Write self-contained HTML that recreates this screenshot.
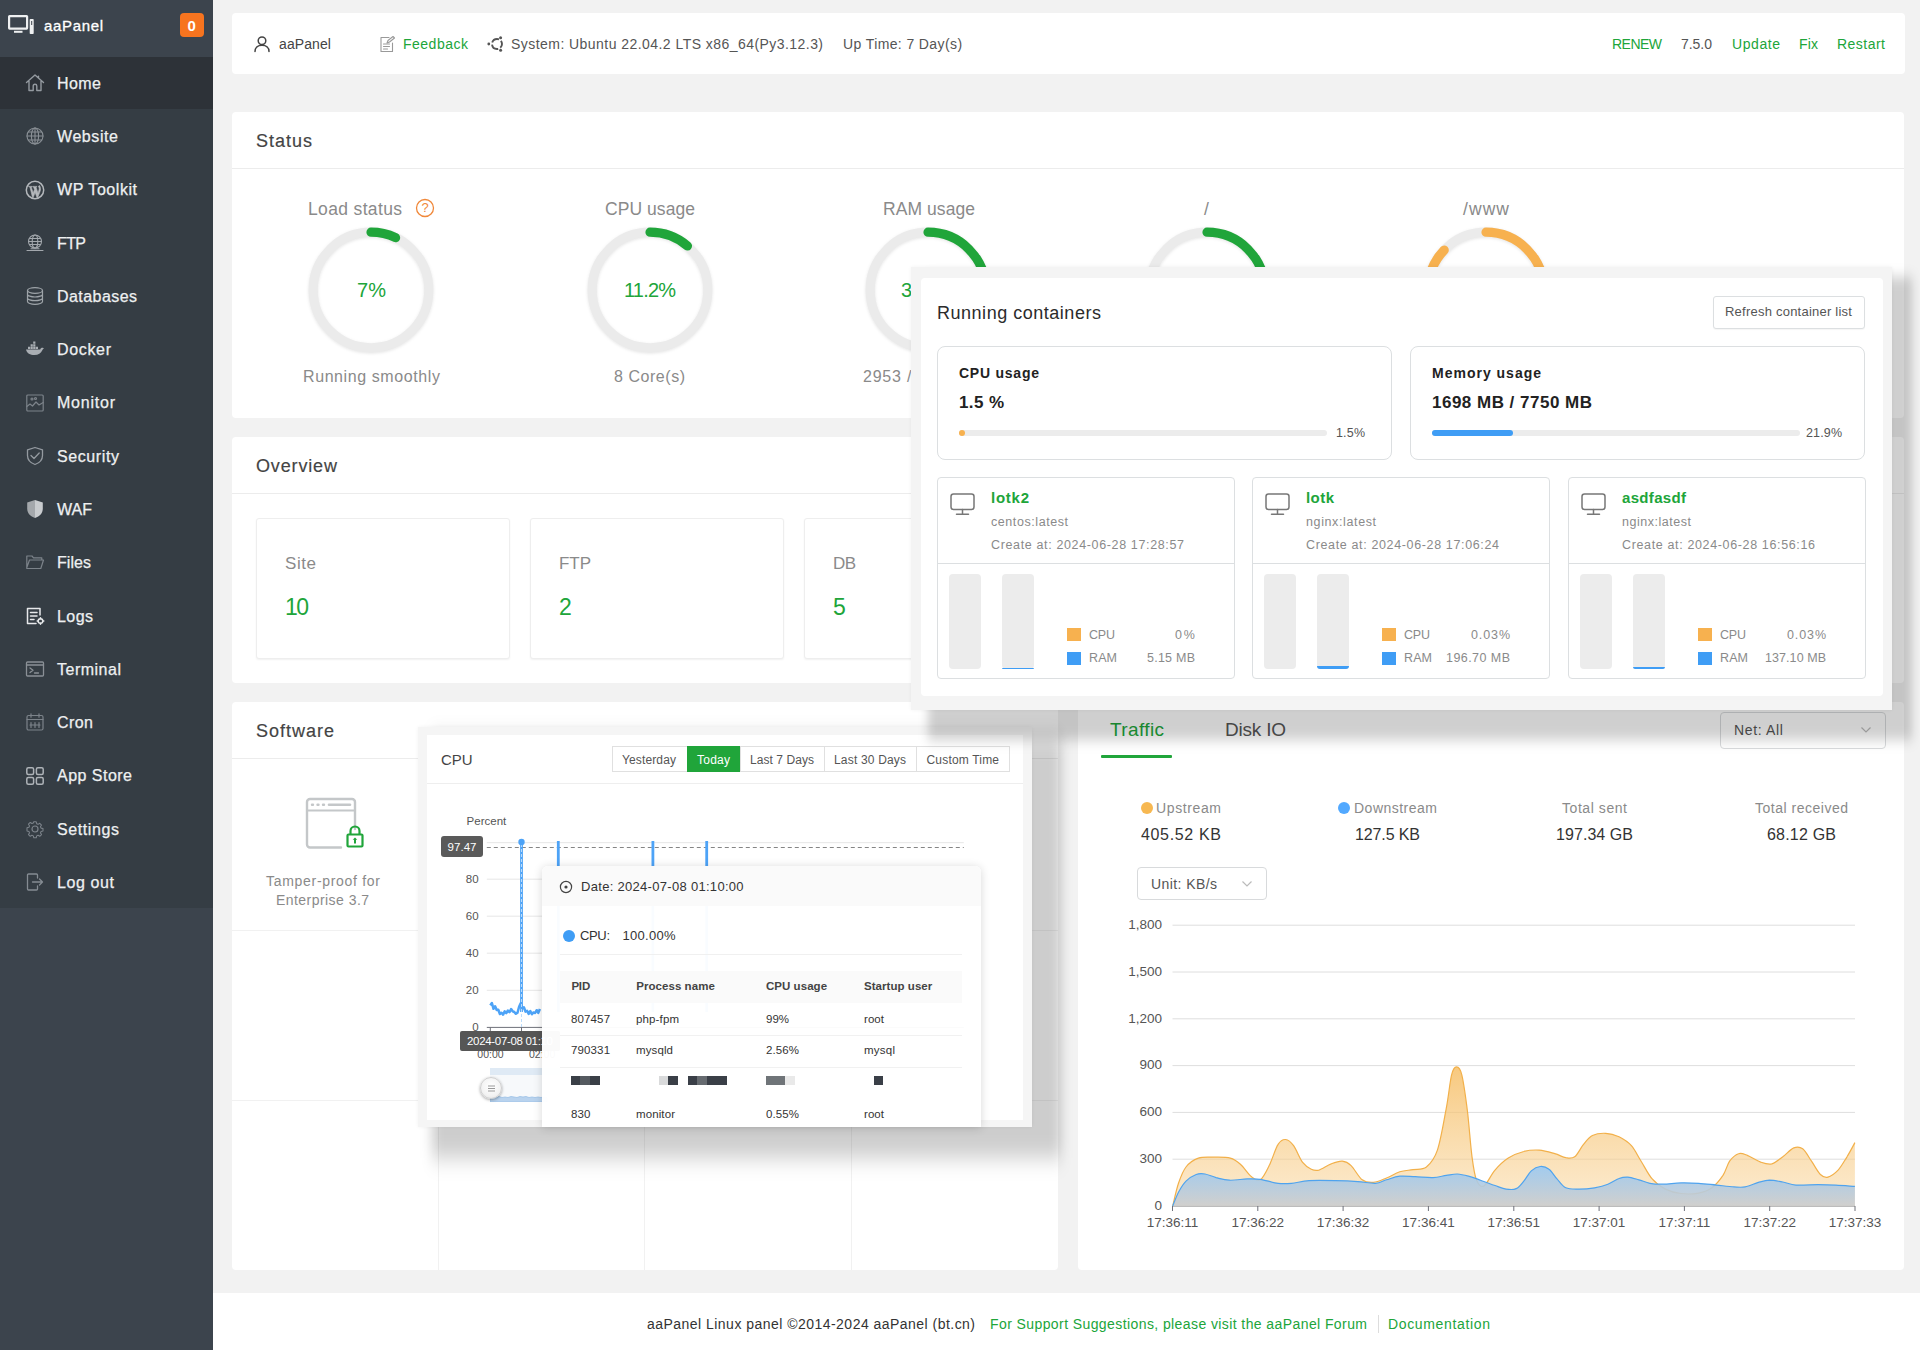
<!DOCTYPE html>
<html lang="en"><head><meta charset="utf-8"><title>aaPanel</title>
<style>
*{margin:0;padding:0;box-sizing:border-box}
html,body{width:1920px;height:1350px;overflow:hidden}
body{position:relative;background:#f2f2f2;font-family:"Liberation Sans",sans-serif;}
.t{position:absolute;white-space:nowrap;line-height:20px;height:20px}
.b{position:absolute;display:block}
.p{position:absolute;background:#fff;border-radius:4px}
</style></head>
<body>
<!-- sec_sidebar -->
<div class="b" style="left:0px;top:0px;width:213px;height:1350px;background:#3c444d"></div>
<div class="b" style="left:0px;top:57px;width:213px;height:851px;background:#353d44"></div>
<div class="b" style="left:0px;top:57px;width:213px;height:52px;background:#2d3238"></div>
<svg class="b" style="left:7px;top:14px;" width="28" height="22" viewBox="0 0 28 22"><g fill="none" stroke="#eef0f1" stroke-width="2.200" stroke-linejoin="round"><rect x="2.100" y="2.100" width="18" height="12.500" rx="0.500"></rect></g><g fill="#eef0f1"><rect x="7" y="16.800" width="8.500" height="2"></rect><rect x="22.700" y="5" width="4" height="15" rx="0.800"></rect></g><rect x="24.200" y="7" width="1" height="4" fill="#3c444d"></rect></svg>
<span class="t" style="left: 44px; top: 15.8px; font-size: 15px; color: rgb(255, 255, 255); -webkit-text-stroke: 0.3px rgb(255, 255, 255); letter-spacing: 0.66px;">aaPanel</span>
<div class="b" style="left:180px;top:13px;width:24px;height:24px;background:#f7741f;border-radius:4px"></div>
<span class="t" style="left:187.5px;top:15.5px;font-size:15px;color:#fff;font-weight:700;">0</span>
<svg class="b" style="left:25px;top:73px;" width="20" height="20" viewBox="0 0 20 20"><path fill="none" stroke="#949aa0" stroke-linecap="round" stroke-linejoin="round" stroke-width="1.400" d="M1.5 9.5L10 2l8.500 7.500M4 8v9.500h4.200V13a1.800 1.800 0 0 1 3.600 0v4.500H16V8M13.500 3.200V5"></path></svg>
<span class="t" style="left: 57px; top: 73.8px; font-size: 16px; color: rgb(238, 240, 241); -webkit-text-stroke: 0.25px rgb(238, 240, 241); letter-spacing: 0.44px;">Home</span>
<svg class="b" style="left:25px;top:126px;" width="20" height="20" viewBox="0 0 20 20"><g fill="none" stroke="#8a9096" stroke-linecap="round" stroke-linejoin="round" stroke-width="1.1"><circle cx="10" cy="10" r="8"></circle><ellipse cx="10" cy="10" rx="3.600" ry="8"></ellipse><path d="M2 10h16M3.200 6h13.600M3.200 14h13.600M10 2v16"></path></g></svg>
<span class="t" style="left: 57px; top: 127.1px; font-size: 16px; color: rgb(238, 240, 241); -webkit-text-stroke: 0.25px rgb(238, 240, 241); letter-spacing: 0.58px;">Website</span>
<svg class="b" style="left:25px;top:180px;" width="20" height="20" viewBox="0 0 20 20"><circle cx="10" cy="10" r="8.700" fill="none" stroke="#b4b8bc" stroke-width="1.500"></circle><path fill="#b4b8bc" stroke="#b4b8bc" stroke-width=".600" stroke-linejoin="round" d="M3.300 7.200h3.700v.7h-.9l2.100 6 1.200-3.600-.9-2.400h-.8v-.7h4.200v.7h-.9l2.100 6 1-3.100c.5-1.500.1-2.300-.3-2.900-.5-.8.100-1.700.9-1.600 1.300 2.200 1.200 4.600.5 6.300l-2.400 6.100h-.8l-1.900-5.300-1.900 5.300h-.8L4.800 7.900h-.9z" transform="translate(0.300,-0.600) scale(0.97)"></path></svg>
<span class="t" style="left: 57px; top: 180.3px; font-size: 16px; color: rgb(238, 240, 241); -webkit-text-stroke: 0.25px rgb(238, 240, 241); letter-spacing: 0.56px;">WP Toolkit</span>
<svg class="b" style="left:25px;top:233px;" width="20" height="20" viewBox="0 0 20 20"><g fill="none" stroke="#a3a8ad" stroke-linecap="round" stroke-linejoin="round" stroke-width="1.1"><circle cx="10" cy="8.500" r="6.500"></circle><ellipse cx="10" cy="8.500" rx="2.800" ry="6.500"></ellipse><path d="M3.500 8.500h13M4.500 5.500h11M4.500 11.500h11M2 17.500h16M6 15.800h8"></path></g></svg>
<span class="t" style="left: 57px; top: 233.6px; font-size: 16px; color: rgb(238, 240, 241); -webkit-text-stroke: 0.25px rgb(238, 240, 241); letter-spacing: -0.61px;">FTP</span>
<svg class="b" style="left:25px;top:286px;" width="20" height="20" viewBox="0 0 20 20"><g fill="none" stroke="#9ea4a9" stroke-linecap="round" stroke-linejoin="round" stroke-width="1.2"><ellipse cx="10" cy="4.500" rx="7.500" ry="2.800"></ellipse><path d="M2.500 4.500v11c0 1.500 3.400 2.800 7.500 2.800s7.500-1.300 7.500-2.800v-11M2.500 8.200c0 1.500 3.400 2.800 7.500 2.800s7.500-1.300 7.500-2.800M2.500 11.900c0 1.500 3.400 2.800 7.500 2.800s7.500-1.300 7.500-2.800"></path></g></svg>
<span class="t" style="left: 57px; top: 286.9px; font-size: 16px; color: rgb(238, 240, 241); -webkit-text-stroke: 0.25px rgb(238, 240, 241); letter-spacing: 0.44px;">Databases</span>
<svg class="b" style="left:25px;top:339px;" width="20" height="20" viewBox="0 0 20 20"><g fill="#a9aeb3" stroke="none"><path d="M1 10.500h14.200c.3-1.200 1.300-1.900 2.600-1.700.4.100.9.300 1.200.6-1 .4-1.300 1-1.700 1.800-1.300 3.200-4 4.800-7.800 4.800-4.500 0-7.500-1.500-8.500-5.500z"></path><path d="M3 7.800h2.200v2.200H3zM5.600 7.800h2.200v2.200H5.600zM8.200 7.800h2.200v2.200H8.200zM10.800 7.800H13v2.200h-2.200zM5.600 5.200h2.200v2.200H5.600zM8.200 5.200h2.200v2.200H8.200zM8.200 2.600h2.200v2.200H8.200z"></path></g></svg>
<span class="t" style="left: 57px; top: 340.2px; font-size: 16px; color: rgb(238, 240, 241); -webkit-text-stroke: 0.25px rgb(238, 240, 241); letter-spacing: 0.66px;">Docker</span>
<svg class="b" style="left:25px;top:393px;" width="20" height="20" viewBox="0 0 20 20"><g fill="none" stroke="#7c838a" stroke-linecap="round" stroke-linejoin="round" stroke-width="1.2"><rect x="1.800" y="2" width="16.400" height="16" rx="1"></rect><path d="M1.800 13.500l3.200-2.500 2.500 2 3.500-4 3 3 4.200-2.500"></path><circle cx="7" cy="6" r="1"></circle><circle cx="10.500" cy="5.500" r="1"></circle></g></svg>
<span class="t" style="left: 57px; top: 393.4px; font-size: 16px; color: rgb(238, 240, 241); -webkit-text-stroke: 0.25px rgb(238, 240, 241); letter-spacing: 0.77px;">Monitor</span>
<svg class="b" style="left:25px;top:446px;" width="20" height="20" viewBox="0 0 20 20"><g fill="none" stroke="#949aa0" stroke-linecap="round" stroke-linejoin="round" stroke-width="1.3"><path d="M10 1.500l7.500 2.300v5.700c0 4.300-3 7.400-7.500 9-4.500-1.600-7.500-4.700-7.500-9V3.800z"></path><path d="M6 9.500l3 3 5.200-5.500"></path></g></svg>
<span class="t" style="left: 57px; top: 446.7px; font-size: 16px; color: rgb(238, 240, 241); -webkit-text-stroke: 0.25px rgb(238, 240, 241); letter-spacing: 0.6px;">Security</span>
<svg class="b" style="left:25px;top:499px;" width="20" height="20" viewBox="0 0 20 20"><g fill="#c9cccf" stroke="none"><path d="M10 1l7.800 2.500v6.200c0 4.400-3.100 7.600-7.800 9.300V1z"></path><path opacity=".75" d="M10 1L2.200 3.500v6.200c0 4.400 3.100 7.600 7.800 9.300V1z"></path></g></svg>
<span class="t" style="left: 57px; top: 500px; font-size: 16px; color: rgb(238, 240, 241); -webkit-text-stroke: 0.25px rgb(238, 240, 241); letter-spacing: 0.02px;">WAF</span>
<svg class="b" style="left:25px;top:552px;" width="20" height="20" viewBox="0 0 20 20"><g fill="none" stroke="#7c838a" stroke-linecap="round" stroke-linejoin="round" stroke-width="1.2"><path d="M1.800 15.500V4h5.200l1.500 1.800h8.300v2.200M1.800 15.500l2.700-7.500h14l-2.700 8.500H1.800z"></path></g></svg>
<span class="t" style="left: 57px; top: 553.2px; font-size: 16px; color: rgb(238, 240, 241); -webkit-text-stroke: 0.25px rgb(238, 240, 241); letter-spacing: 0.05px;">Files</span>
<svg class="b" style="left:25px;top:606px;" width="20" height="20" viewBox="0 0 20 20"><g fill="none" stroke="#e6e8ea" stroke-width="1.500" stroke-linecap="round" stroke-linejoin="round"><path d="M15 9V2.500H2.500v15H11"></path><path d="M5.500 6.500h6.500M5.500 10h6.500M5.500 13.500h3.500"></path><circle cx="15.500" cy="15" r="2.300"></circle><path d="M15.500 11.700v1M15.500 17.300v1M12.200 15h1M17.800 15h1"></path></g></svg>
<span class="t" style="left: 57px; top: 606.5px; font-size: 16px; color: rgb(238, 240, 241); -webkit-text-stroke: 0.25px rgb(238, 240, 241); letter-spacing: 0.43px;">Logs</span>
<svg class="b" style="left:25px;top:659px;" width="20" height="20" viewBox="0 0 20 20"><g fill="none" stroke="#8a9096" stroke-linecap="round" stroke-linejoin="round" stroke-width="1.300"><rect x="1.500" y="3" width="17" height="14" rx="1"></rect><path d="M1.500 6h17M5 9l3 2.300L5 13.600M9.500 14h4"></path></g></svg>
<span class="t" style="left: 57px; top: 659.8px; font-size: 16px; color: rgb(238, 240, 241); -webkit-text-stroke: 0.25px rgb(238, 240, 241); letter-spacing: 0.5px;">Terminal</span>
<svg class="b" style="left:25px;top:712px;" width="20" height="20" viewBox="0 0 20 20"><g fill="none" stroke="#7c838a" stroke-linecap="round" stroke-linejoin="round" stroke-width="1.200"><rect x="2" y="3.500" width="16" height="14.500" rx="1.500"></rect><path d="M2 7.500h16M6 1.800v3.400M14 1.800v3.400M6 10.500v5M10 10.500v5M14 10.500v5M5 13h10"></path></g></svg>
<span class="t" style="left: 57px; top: 713px; font-size: 16px; color: rgb(238, 240, 241); -webkit-text-stroke: 0.25px rgb(238, 240, 241); letter-spacing: 0.44px;">Cron</span>
<svg class="b" style="left:25px;top:766px;" width="20" height="20" viewBox="0 0 20 20"><g fill="none" stroke="#aeb3b8" stroke-linecap="round" stroke-linejoin="round" stroke-width="1.500"><rect x="1.800" y="1.800" width="6.800" height="6.800" rx="1.500"></rect><rect x="11.400" y="1.800" width="6.800" height="6.800" rx="1.500"></rect><rect x="1.800" y="11.400" width="6.800" height="6.800" rx="1.500"></rect><rect x="11.400" y="11.400" width="6.800" height="6.800" rx="1.500"></rect></g></svg>
<span class="t" style="left: 57px; top: 766.3px; font-size: 16px; color: rgb(238, 240, 241); -webkit-text-stroke: 0.25px rgb(238, 240, 241); letter-spacing: 0.48px;">App Store</span>
<svg class="b" style="left:25px;top:819px;" width="20" height="20" viewBox="0 0 20 20"><g fill="none" stroke="#7c838a" stroke-linecap="round" stroke-linejoin="round" stroke-width="1.200"><circle cx="10" cy="10" r="3"></circle><path d="M8.600 1.800h2.800l.5 2.200 1.600.7 1.900-1.200 2 2-1.200 1.900.7 1.600 2.200.5v2.800l-2.200.5-.7 1.600 1.200 1.900-2 2-1.900-1.200-1.600.7-.5 2.200H8.600l-.5-2.200-1.600-.7-1.900 1.200-2-2 1.200-1.900-.7-1.600-2.200-.5V8.600l2.200-.5.700-1.600-1.200-1.900 2-2 1.900 1.200 1.600-.7z" transform="translate(1.200,1.200) scale(.88)"></path></g></svg>
<span class="t" style="left: 57px; top: 819.6px; font-size: 16px; color: rgb(238, 240, 241); -webkit-text-stroke: 0.25px rgb(238, 240, 241); letter-spacing: 0.6px;">Settings</span>
<svg class="b" style="left:25px;top:872px;" width="20" height="20" viewBox="0 0 20 20"><g fill="none" stroke="#858c93" stroke-linecap="round" stroke-linejoin="round" stroke-width="1.300"><path d="M12.500 6V3a1 1 0 0 0-1-1H3.500a1 1 0 0 0-1 1v14a1 1 0 0 0 1 1h8a1 1 0 0 0 1-1v-3"></path><path d="M7.500 10h10M14.500 7l3 3-3 3"></path></g></svg>
<span class="t" style="left: 57px; top: 872.9px; font-size: 16px; color: rgb(238, 240, 241); -webkit-text-stroke: 0.25px rgb(238, 240, 241); letter-spacing: 0.6px;">Log out</span>
<!-- sec_main -->
<div class="p" style="left:232px;top:13px;width:1673px;height:61px;"></div>
<svg class="b" style="left:253px;top:35px;" width="18" height="18" viewBox="0 0 18 18"><g fill="none" stroke="#444" stroke-width="1.500" stroke-linecap="round"><circle cx="9" cy="5.800" r="3.800"></circle><path d="M2 16.500c0-4 3-6.300 7-6.300s7 2.300 7 6.300"></path></g></svg>
<span class="t" style="left: 279px; top: 34px; font-size: 14px; color: rgb(68, 68, 68); letter-spacing: 0.1px;">aaPanel</span>
<svg class="b" style="left:378px;top:35px;" width="18" height="18" viewBox="0 0 18 18"><g fill="none" stroke="#999" stroke-width="1.100" stroke-linecap="round" stroke-linejoin="round"><path d="M11 2.500H3v14h11.500V8"></path><path d="M5.500 9h6M5.500 11.500h6M5.500 14h4"></path><path d="M9 8l1-2.500 5-4 1.500 1.500-5 4z"></path></g></svg>
<span class="t" style="left: 403px; top: 34px; font-size: 14px; color: rgb(32, 165, 58); letter-spacing: 0.5px;">Feedback</span>
<svg class="b" style="left:486px;top:35px;" width="18" height="18" viewBox="0 0 18 18"><circle cx="11" cy="9" r="5" fill="none" stroke="#555" stroke-width="1.900" stroke-dasharray="8.270 2.200" stroke-dashoffset="4.130"></circle><g fill="#555"><circle cx="2.800" cy="9" r="1.400"></circle><circle cx="14.600" cy="2.800" r="1.500"></circle><circle cx="14.600" cy="15.200" r="1.500"></circle></g></svg>
<span class="t" style="left: 511px; top: 34px; font-size: 14px; color: rgb(85, 85, 85); letter-spacing: 0.45px;">System: Ubuntu 22.04.2 LTS x86_64(Py3.12.3)</span>
<span class="t" style="left: 843px; top: 34px; font-size: 14px; color: rgb(85, 85, 85); letter-spacing: 0.39px;">Up Time: 7 Day(s)</span>
<span class="t" style="left: 1612px; top: 34px; font-size: 14px; color: rgb(32, 165, 58); letter-spacing: -0.53px;">RENEW</span>
<span class="t" style="left: 1681px; top: 34px; font-size: 14px; color: rgb(85, 85, 85); letter-spacing: -0.04px;">7.5.0</span>
<span class="t" style="left: 1732px; top: 34px; font-size: 14px; color: rgb(32, 165, 58); letter-spacing: 0.57px;">Update</span>
<span class="t" style="left: 1799px; top: 34px; font-size: 14px; color: rgb(32, 165, 58); letter-spacing: 0.16px;">Fix</span>
<span class="t" style="left: 1837px; top: 34px; font-size: 14px; color: rgb(32, 165, 58); letter-spacing: 0.48px;">Restart</span>
<div class="p" style="left:232px;top:112px;width:1672px;height:306px;"></div>
<div class="b" style="left:232px;top:168px;width:1672px;height:1px;background:#ececec"></div>
<span class="t" style="left: 256px; top: 131px; font-size: 18px; color: rgb(68, 68, 68); -webkit-text-stroke: 0.18px rgb(68, 68, 68); letter-spacing: 0.99px;">Status</span>
<span class="t" style="left: 308px; top: 199px; font-size: 17.5px; color: rgb(138, 138, 138); letter-spacing: 0.35px;">Load status</span>
<span class="t" style="left: 605px; top: 199px; font-size: 17.5px; color: rgb(138, 138, 138); letter-spacing: 0.06px;">CPU usage</span>
<span class="t" style="left: 883px; top: 199px; font-size: 17.5px; color: rgb(138, 138, 138); letter-spacing: 0.07px;">RAM usage</span>
<span class="t" style="left: 1204px; top: 199px; font-size: 17.5px; color: rgb(138, 138, 138);">/</span>
<span class="t" style="left: 1463px; top: 199px; font-size: 17.5px; color: rgb(138, 138, 138); letter-spacing: 1.07px;">/www</span>
<svg class="b" style="left:415px;top:198px;" width="20" height="20" viewBox="0 0 20 20"><circle cx="10" cy="10" r="8.500" fill="none" stroke="#f0883a" stroke-width="1.300"></circle></svg>
<span class="t" style="left:421.5px;top:198.0px;font-size:13px;color:#f0883a;">?</span>
<svg class="b" style="left:301px;top:220px;filter:drop-shadow(0 1px 1.500px rgba(0,0,0,.10))" width="140" height="140" viewBox="0 0 140 140"><circle cx="70" cy="70" r="57.8" fill="none" stroke="#ebebeb" stroke-width="9.2"></circle><circle cx="70" cy="70" r="57.8" fill="none" stroke="#20a53a" stroke-width="9.2" stroke-linecap="round" stroke-dasharray="25.4 363.2" transform="rotate(-90 70 70)"></circle></svg>
<svg class="b" style="left:580px;top:220px;filter:drop-shadow(0 1px 1.500px rgba(0,0,0,.10))" width="140" height="140" viewBox="0 0 140 140"><circle cx="70" cy="70" r="57.8" fill="none" stroke="#ebebeb" stroke-width="9.2"></circle><circle cx="70" cy="70" r="57.8" fill="none" stroke="#20a53a" stroke-width="9.2" stroke-linecap="round" stroke-dasharray="40.7 363.2" transform="rotate(-90 70 70)"></circle></svg>
<svg class="b" style="left:858px;top:220px;filter:drop-shadow(0 1px 1.500px rgba(0,0,0,.10))" width="140" height="140" viewBox="0 0 140 140"><circle cx="70" cy="70" r="57.8" fill="none" stroke="#ebebeb" stroke-width="9.2"></circle><circle cx="70" cy="70" r="57.8" fill="none" stroke="#20a53a" stroke-width="9.2" stroke-linecap="round" stroke-dasharray="130.7 363.2" transform="rotate(-90 70 70)"></circle></svg>
<svg class="b" style="left:1137px;top:220px;filter:drop-shadow(0 1px 1.500px rgba(0,0,0,.10))" width="140" height="140" viewBox="0 0 140 140"><circle cx="70" cy="70" r="57.8" fill="none" stroke="#ebebeb" stroke-width="9.2"></circle><circle cx="70" cy="70" r="57.8" fill="none" stroke="#20a53a" stroke-width="9.2" stroke-linecap="round" stroke-dasharray="138.0 363.2" transform="rotate(-90 70 70)"></circle></svg>
<svg class="b" style="left:1416px;top:220px;filter:drop-shadow(0 1px 1.500px rgba(0,0,0,.10))" width="140" height="140" viewBox="0 0 140 140"><circle cx="70" cy="70" r="57.8" fill="none" stroke="#ebebeb" stroke-width="9.2"></circle><circle cx="70" cy="70" r="57.8" fill="none" stroke="#f7b14f" stroke-width="9.2" stroke-linecap="round" stroke-dasharray="316.0 363.2" transform="rotate(-90 70 70)"></circle></svg>
<span class="t" style="left: 357px; top: 280px; font-size: 20px; color: rgb(32, 165, 58); letter-spacing: 0.09px;">7%</span>
<span class="t" style="left: 624px; top: 280px; font-size: 20px; color: rgb(32, 165, 58); letter-spacing: -0.81px;">11.2%</span>
<span class="t" style="left: 901px; top: 280px; font-size: 20px; color: rgb(32, 165, 58); letter-spacing: 0.48px;">36%</span>
<span class="t" style="left: 303px; top: 367px; font-size: 16px; color: rgb(138, 138, 138); letter-spacing: 0.59px;">Running smoothly</span>
<span class="t" style="left: 614px; top: 367px; font-size: 16px; color: rgb(138, 138, 138); letter-spacing: 0.54px;">8 Core(s)</span>
<span class="t" style="left: 863px; top: 367px; font-size: 16px; color: rgb(138, 138, 138); letter-spacing: 0.77px;">2953 / 7750(MB)</span>
<div class="p" style="left:232px;top:437px;width:1672px;height:246px;"></div>
<div class="b" style="left:232px;top:493px;width:1672px;height:1px;background:#ececec"></div>
<span class="t" style="left: 256px; top: 455.8px; font-size: 18px; color: rgb(68, 68, 68); -webkit-text-stroke: 0.18px rgb(68, 68, 68); letter-spacing: 0.85px;">Overview</span>
<div class="b" style="left:256px;top:518px;width:254px;height:141px;background:#fff;border:1px solid #eee;border-radius:3px;box-shadow:0 1px 2px rgba(0,0,0,.06)"></div>
<span class="t" style="left: 285px; top: 553.8px; font-size: 17px; color: rgb(138, 138, 138); letter-spacing: 0.57px;">Site</span>
<span class="t" style="left: 285px; top: 592.8px; font-size: 23px; color: rgb(32, 165, 58); line-height: 28px; height: 28px; letter-spacing: -1.59px;">10</span>
<div class="b" style="left:530px;top:518px;width:254px;height:141px;background:#fff;border:1px solid #eee;border-radius:3px;box-shadow:0 1px 2px rgba(0,0,0,.06)"></div>
<span class="t" style="left: 559px; top: 553.8px; font-size: 17px; color: rgb(138, 138, 138); letter-spacing: -0.05px;">FTP</span>
<span class="t" style="left: 559px; top: 592.8px; font-size: 23px; color: rgb(32, 165, 58); line-height: 28px; height: 28px;">2</span>
<div class="b" style="left:804px;top:518px;width:254px;height:141px;background:#fff;border:1px solid #eee;border-radius:3px;box-shadow:0 1px 2px rgba(0,0,0,.06)"></div>
<span class="t" style="left: 833px; top: 553.8px; font-size: 17px; color: rgb(138, 138, 138); letter-spacing: -0.63px;">DB</span>
<span class="t" style="left: 833px; top: 592.8px; font-size: 23px; color: rgb(32, 165, 58); line-height: 28px; height: 28px;">5</span>
<div class="p" style="left:232px;top:702px;width:826px;height:568px;"></div>
<div class="b" style="left:232px;top:758px;width:826px;height:1px;background:#ececec"></div>
<span class="t" style="left: 256px; top: 720.8px; font-size: 18px; color: rgb(68, 68, 68); -webkit-text-stroke: 0.18px rgb(68, 68, 68); letter-spacing: 0.99px;">Software</span>
<div class="b" style="left:438px;top:759px;width:1px;height:511px;background:#f1f1f1"></div>
<div class="b" style="left:644px;top:759px;width:1px;height:511px;background:#f1f1f1"></div>
<div class="b" style="left:851px;top:759px;width:1px;height:511px;background:#f1f1f1"></div>
<div class="b" style="left:232px;top:930px;width:826px;height:1px;background:#f1f1f1"></div>
<div class="b" style="left:232px;top:1100px;width:826px;height:1px;background:#f1f1f1"></div>
<svg class="b" style="left:303px;top:794px;" width="66" height="58" viewBox="0 0 66 58"><g fill="none" stroke="#c4c7c9" stroke-width="2.400" stroke-linejoin="round" stroke-linecap="round"><path d="M38 53.500H7a3 3 0 0 1-3-3V8a3 3 0 0 1 3-3h42a3 3 0 0 1 3 3v27"></path><path d="M4 16.500h48" stroke-width="2"></path><path d="M9 10.800h1M14.500 10.800h1M20 10.800h1" stroke-width="2.400"></path><path d="M26 10.800h21" stroke-width="2.600"></path></g><g fill="none" stroke="#20a53a" stroke-width="2.200" stroke-linejoin="round"><rect x="44.500" y="40.500" width="15" height="12" rx="1"></rect><path d="M47.500 40.500v-3.500a4.500 4.500 0 0 1 9 0v3.500"></path></g><path fill="#20a53a" d="M52 43.500l2.300 2.300h-1.300v3.700h-2v-3.700h-1.300z"></path></svg>
<span class="t" style="left: 266px; top: 871px; font-size: 14px; color: rgb(138, 138, 138); letter-spacing: 0.7px;">Tamper-proof for</span>
<span class="t" style="left: 276px; top: 890px; font-size: 14px; color: rgb(138, 138, 138); letter-spacing: 0.45px;">Enterprise 3.7</span>
<div class="b" style="left:213px;top:1293px;width:1707px;height:57px;background:#fff"></div>
<span class="t" style="left: 647px; top: 1314px; font-size: 14px; color: rgb(51, 51, 51); letter-spacing: 0.47px;">aaPanel Linux panel ©2014-2024 aaPanel (bt.cn)</span>
<span class="t" style="left: 990px; top: 1314px; font-size: 14px; color: rgb(32, 165, 58); letter-spacing: 0.41px;">For Support Suggestions, please visit the aaPanel Forum</span>
<div class="b" style="left:1378px;top:1315px;width:1px;height:18px;background:#ddd"></div>
<span class="t" style="left: 1388px; top: 1314px; font-size: 14px; color: rgb(32, 165, 58); letter-spacing: 0.65px;">Documentation</span>
<!-- sec_traffic -->
<div class="p" style="left:1078px;top:702px;width:826px;height:568px"></div>
<span class="t" style="left: 1110px; top: 720px; font-size: 19px; color: rgb(32, 165, 58); letter-spacing: 0.38px;">Traffic</span>
<div class="b" style="left:1101px;top:755px;width:71px;height:3px;background:#20a53a;border-radius:1px"></div>
<span class="t" style="left: 1225px; top: 720px; font-size: 19px; color: rgb(85, 85, 85); letter-spacing: -0.21px;">Disk IO</span>
<div class="b" style="left:1720px;top:711.5px;width:166px;height:37.0px;background:#fff;border:1px solid #d8dadc;border-radius:4px"></div>
<span class="t" style="left: 1734px; top: 720px; font-size: 14px; color: rgb(85, 85, 85); letter-spacing: 0.66px;">Net: All</span>
<svg class="b" style="left:1860px;top:725px;" width="12" height="10" viewBox="0 0 12 10"><path d="M1.500 2.500l4.500 4.500 4.500-4.500" fill="none" stroke="#bbb" stroke-width="1.200"></path></svg>
<div class="b" style="left:1141px;top:802px;width:12px;height:12px;background:#f7b851;border-radius:6px"></div>
<span class="t" style="left: 1156px; top: 798px; font-size: 14px; color: rgb(138, 138, 138); letter-spacing: 0.62px;">Upstream</span>
<span class="t" style="left: 1141px; top: 825px; font-size: 16px; color: rgb(51, 51, 51); letter-spacing: 0.66px;">405.52 KB</span>
<div class="b" style="left:1338px;top:802px;width:12px;height:12px;background:#52a9ff;border-radius:6px"></div>
<span class="t" style="left: 1354px; top: 798px; font-size: 14px; color: rgb(138, 138, 138); letter-spacing: 0.49px;">Downstream</span>
<span class="t" style="left: 1355px; top: 825px; font-size: 16px; color: rgb(51, 51, 51); letter-spacing: -0.12px;">127.5 KB</span>
<span class="t" style="left: 1562px; top: 798px; font-size: 14px; color: rgb(138, 138, 138); letter-spacing: 0.56px;">Total sent</span>
<span class="t" style="left: 1556px; top: 825px; font-size: 16px; color: rgb(51, 51, 51); letter-spacing: 0.06px;">197.34 GB</span>
<span class="t" style="left: 1755px; top: 798px; font-size: 14px; color: rgb(138, 138, 138); letter-spacing: 0.51px;">Total received</span>
<span class="t" style="left: 1767px; top: 825px; font-size: 16px; color: rgb(51, 51, 51); letter-spacing: 0.2px;">68.12 GB</span>
<div class="b" style="left:1137px;top:867px;width:130px;height:33px;background:#fff;border:1px solid #d8dadc;border-radius:4px"></div>
<span class="t" style="left: 1151px; top: 874px; font-size: 14px; color: rgb(85, 85, 85); letter-spacing: 0.42px;">Unit: KB/s</span>
<svg class="b" style="left:1241px;top:879px;" width="12" height="10" viewBox="0 0 12 10"><path d="M1.500 2.500l4.500 4.500 4.500-4.500" fill="none" stroke="#bbb" stroke-width="1.200"></path></svg>
<svg class="b" style="left:1100px;top:900px;font-family:'Liberation Sans',sans-serif" width="800" height="340" viewBox="0 0 800 340"><path d="M72.5,306.0H755" stroke="#7a7a7a" stroke-width="1" fill="none"></path><text x="62" y="309.7" text-anchor="end" font-size="13.500" fill="#555">0</text><path d="M72.5,259.2H755" stroke="#dedede" stroke-width="1" fill="none"></path><text x="62" y="262.9" text-anchor="end" font-size="13.500" fill="#555">300</text><path d="M72.5,212.4H755" stroke="#dedede" stroke-width="1" fill="none"></path><text x="62" y="216.1" text-anchor="end" font-size="13.500" fill="#555">600</text><path d="M72.5,165.6H755" stroke="#dedede" stroke-width="1" fill="none"></path><text x="62" y="169.3" text-anchor="end" font-size="13.500" fill="#555">900</text><path d="M72.5,118.8H755" stroke="#dedede" stroke-width="1" fill="none"></path><text x="62" y="122.5" text-anchor="end" font-size="13.500" fill="#555">1,200</text><path d="M72.5,72.0H755" stroke="#dedede" stroke-width="1" fill="none"></path><text x="62" y="75.7" text-anchor="end" font-size="13.500" fill="#555">1,500</text><path d="M72.5,25.2H755" stroke="#dedede" stroke-width="1" fill="none"></path><text x="62" y="28.9" text-anchor="end" font-size="13.500" fill="#555">1,800</text><path d="M72.5,306.0v5" stroke="#6e7079" stroke-width="1" fill="none"></path><text x="72.5" y="327" text-anchor="middle" font-size="13.500" fill="#555">17:36:11</text><path d="M157.8,306.0v5" stroke="#6e7079" stroke-width="1" fill="none"></path><text x="157.8" y="327" text-anchor="middle" font-size="13.500" fill="#555">17:36:22</text><path d="M243.1,306.0v5" stroke="#6e7079" stroke-width="1" fill="none"></path><text x="243.1" y="327" text-anchor="middle" font-size="13.500" fill="#555">17:36:32</text><path d="M328.4,306.0v5" stroke="#6e7079" stroke-width="1" fill="none"></path><text x="328.4" y="327" text-anchor="middle" font-size="13.500" fill="#555">17:36:41</text><path d="M413.8,306.0v5" stroke="#6e7079" stroke-width="1" fill="none"></path><text x="413.8" y="327" text-anchor="middle" font-size="13.500" fill="#555">17:36:51</text><path d="M499.1,306.0v5" stroke="#6e7079" stroke-width="1" fill="none"></path><text x="499.1" y="327" text-anchor="middle" font-size="13.500" fill="#555">17:37:01</text><path d="M584.4,306.0v5" stroke="#6e7079" stroke-width="1" fill="none"></path><text x="584.4" y="327" text-anchor="middle" font-size="13.500" fill="#555">17:37:11</text><path d="M669.7,306.0v5" stroke="#6e7079" stroke-width="1" fill="none"></path><text x="669.7" y="327" text-anchor="middle" font-size="13.500" fill="#555">17:37:22</text><path d="M755.0,306.0v5" stroke="#6e7079" stroke-width="1" fill="none"></path><text x="755.0" y="327" text-anchor="middle" font-size="13.500" fill="#555">17:37:33</text><defs><linearGradient id="go" x1="0" y1="0" x2="0" y2="1"><stop offset="0" stop-color="#f5b95a" stop-opacity=".78"></stop><stop offset="1" stop-color="#f9d7a0" stop-opacity=".5"></stop></linearGradient><linearGradient id="gb" x1="0" y1="0" x2="0" y2="1"><stop offset="0" stop-color="#96c8f5" stop-opacity=".88"></stop><stop offset="1" stop-color="#cdcdcd" stop-opacity=".92"></stop></linearGradient></defs><path d="M72.7,305.9C73.7,302.1 76.3,289.8 78.5,283.3C80.7,276.8 82.7,271.2 86.0,267.0C89.3,262.7 93.7,259.7 98.4,258.1C103.0,256.5 108.6,257.2 113.9,257.2C119.2,257.2 125.8,256.9 130.3,258.1C134.7,259.3 136.9,261.2 140.4,264.3C144.0,267.4 148.2,274.1 151.5,276.7C154.8,279.3 157.4,281.6 160.4,279.8C163.3,277.9 166.3,271.5 169.2,265.6C172.2,259.7 175.3,248.7 178.1,244.4C180.8,240.0 183.0,239.3 185.6,239.5C188.2,239.7 190.8,241.9 193.6,245.7C196.4,249.5 199.5,258.2 202.4,262.1C205.4,266.0 208.5,267.8 211.3,269.2C214.0,270.5 215.5,270.9 218.8,270.1C222.1,269.2 227.3,265.3 231.2,263.9C235.1,262.4 238.9,260.9 242.3,261.2C245.6,261.5 247.8,262.5 251.1,265.6C254.4,268.7 258.5,277.0 262.2,279.8C265.9,282.6 269.2,282.7 273.3,282.4C277.3,282.2 282.1,279.8 286.5,278.0C291.0,276.2 295.4,273.2 299.8,271.8C304.2,270.4 308.7,270.4 313.1,269.6C317.5,268.8 322.3,270.2 326.4,267.0C330.4,263.7 334.1,259.9 337.4,250.1C340.8,240.3 343.9,220.6 346.3,208.1C348.7,195.5 349.9,181.7 351.6,174.9C353.3,168.0 354.8,166.9 356.5,166.9C358.2,166.9 360.0,167.3 361.8,174.9C363.6,182.5 365.9,198.8 367.6,212.5C369.2,226.2 370.5,245.6 372.0,256.8C373.5,268.0 374.4,274.9 376.4,279.8C378.4,284.7 380.8,287.6 383.9,286.0C387.0,284.4 390.9,274.7 395.0,270.1C399.1,265.4 403.5,261.2 408.3,258.1C413.1,255.0 418.6,252.8 423.8,251.5C428.9,250.1 434.1,249.8 439.3,250.1C444.4,250.5 450.3,252.4 454.8,253.7C459.2,254.9 462.5,257.1 465.8,257.7C469.2,258.2 471.7,259.0 474.7,256.8C477.6,254.6 480.6,247.9 483.5,244.4C486.5,240.8 488.7,237.4 492.4,235.5C496.1,233.7 501.3,233.1 505.7,233.3C510.1,233.5 514.7,234.8 519.0,236.8C523.2,238.9 527.7,241.6 531.4,245.7C535.0,249.8 537.6,255.7 541.1,261.2C544.6,266.7 548.1,274.3 552.2,278.9C556.2,283.6 560.6,286.7 565.4,289.1C570.2,291.5 575.4,292.9 580.9,293.5C586.5,294.2 593.5,294.0 598.6,293.1C603.8,292.1 607.9,290.7 611.9,287.8C616.0,284.8 620.0,279.8 623.0,275.4C625.9,270.9 627.1,264.8 629.6,261.2C632.2,257.6 635.5,254.6 638.5,253.7C641.4,252.7 643.7,254.0 647.3,255.4C651.0,256.8 656.6,260.7 660.6,262.1C664.7,263.5 668.0,264.7 671.7,263.9C675.4,263.0 679.1,259.4 682.8,256.8C686.4,254.1 690.5,249.2 693.8,247.9C697.1,246.6 699.7,246.6 702.7,248.8C705.6,251.0 708.6,256.9 711.5,261.2C714.5,265.5 717.7,271.8 720.4,274.5C723.1,277.1 725.0,277.9 727.9,277.1C730.9,276.4 734.9,273.4 738.1,270.1C741.3,266.7 744.1,261.3 747.0,256.8C749.8,252.2 753.6,245.0 754.9,242.6L754.9,306.0L72.7,306.0Z" fill="url(#go)" stroke="none"></path><path d="M72.7,305.9C73.7,302.1 76.3,289.8 78.5,283.3C80.7,276.8 82.7,271.2 86.0,267.0C89.3,262.7 93.7,259.7 98.4,258.1C103.0,256.5 108.6,257.2 113.9,257.2C119.2,257.2 125.8,256.9 130.3,258.1C134.7,259.3 136.9,261.2 140.4,264.3C144.0,267.4 148.2,274.1 151.5,276.7C154.8,279.3 157.4,281.6 160.4,279.8C163.3,277.9 166.3,271.5 169.2,265.6C172.2,259.7 175.3,248.7 178.1,244.4C180.8,240.0 183.0,239.3 185.6,239.5C188.2,239.7 190.8,241.9 193.6,245.7C196.4,249.5 199.5,258.2 202.4,262.1C205.4,266.0 208.5,267.8 211.3,269.2C214.0,270.5 215.5,270.9 218.8,270.1C222.1,269.2 227.3,265.3 231.2,263.9C235.1,262.4 238.9,260.9 242.3,261.2C245.6,261.5 247.8,262.5 251.1,265.6C254.4,268.7 258.5,277.0 262.2,279.8C265.9,282.6 269.2,282.7 273.3,282.4C277.3,282.2 282.1,279.8 286.5,278.0C291.0,276.2 295.4,273.2 299.8,271.8C304.2,270.4 308.7,270.4 313.1,269.6C317.5,268.8 322.3,270.2 326.4,267.0C330.4,263.7 334.1,259.9 337.4,250.1C340.8,240.3 343.9,220.6 346.3,208.1C348.7,195.5 349.9,181.7 351.6,174.9C353.3,168.0 354.8,166.9 356.5,166.9C358.2,166.9 360.0,167.3 361.8,174.9C363.6,182.5 365.9,198.8 367.6,212.5C369.2,226.2 370.5,245.6 372.0,256.8C373.5,268.0 374.4,274.9 376.4,279.8C378.4,284.7 380.8,287.6 383.9,286.0C387.0,284.4 390.9,274.7 395.0,270.1C399.1,265.4 403.5,261.2 408.3,258.1C413.1,255.0 418.6,252.8 423.8,251.5C428.9,250.1 434.1,249.8 439.3,250.1C444.4,250.5 450.3,252.4 454.8,253.7C459.2,254.9 462.5,257.1 465.8,257.7C469.2,258.2 471.7,259.0 474.7,256.8C477.6,254.6 480.6,247.9 483.5,244.4C486.5,240.8 488.7,237.4 492.4,235.5C496.1,233.7 501.3,233.1 505.7,233.3C510.1,233.5 514.7,234.8 519.0,236.8C523.2,238.9 527.7,241.6 531.4,245.7C535.0,249.8 537.6,255.7 541.1,261.2C544.6,266.7 548.1,274.3 552.2,278.9C556.2,283.6 560.6,286.7 565.4,289.1C570.2,291.5 575.4,292.9 580.9,293.5C586.5,294.2 593.5,294.0 598.6,293.1C603.8,292.1 607.9,290.7 611.9,287.8C616.0,284.8 620.0,279.8 623.0,275.4C625.9,270.9 627.1,264.8 629.6,261.2C632.2,257.6 635.5,254.6 638.5,253.7C641.4,252.7 643.7,254.0 647.3,255.4C651.0,256.8 656.6,260.7 660.6,262.1C664.7,263.5 668.0,264.7 671.7,263.9C675.4,263.0 679.1,259.4 682.8,256.8C686.4,254.1 690.5,249.2 693.8,247.9C697.1,246.6 699.7,246.6 702.7,248.8C705.6,251.0 708.6,256.9 711.5,261.2C714.5,265.5 717.7,271.8 720.4,274.5C723.1,277.1 725.0,277.9 727.9,277.1C730.9,276.4 734.9,273.4 738.1,270.1C741.3,266.7 744.1,261.3 747.0,256.8C749.8,252.2 753.6,245.0 754.9,242.6" fill="none" stroke="#f2b04a" stroke-width="1.200"></path><path d="M72.7,305.9C73.7,303.6 76.3,296.3 78.5,292.2C80.7,288.1 83.0,284.1 86.0,281.1C88.9,278.2 93.0,275.7 96.2,274.5C99.3,273.3 101.7,273.5 105.0,274.0C108.3,274.6 112.0,276.5 116.1,277.6C120.2,278.6 124.2,280.0 129.4,280.2C134.5,280.5 141.9,279.1 147.1,278.9C152.2,278.8 155.2,278.6 160.4,279.3C165.5,280.1 172.9,282.7 178.1,283.3C183.2,284.0 186.2,283.8 191.4,283.3C196.5,282.9 201.7,281.1 209.1,280.7C216.4,280.2 227.5,280.5 235.6,280.7C243.7,280.8 251.1,281.1 257.8,281.6C264.4,282.0 270.7,283.6 275.5,283.3C280.3,283.0 282.5,281.0 286.5,279.8C290.6,278.6 295.0,276.8 299.8,276.2C304.6,275.7 309.8,276.5 315.3,276.7C320.8,276.9 327.9,277.8 333.0,277.6C338.2,277.4 342.2,276.0 346.3,275.4C350.4,274.8 353.7,273.9 357.4,274.0C361.1,274.2 364.4,275.1 368.4,276.2C372.5,277.4 377.3,279.1 381.7,280.7C386.1,282.2 390.9,284.1 395.0,285.5C399.1,286.9 402.5,288.6 406.1,289.1C409.6,289.6 413.3,290.0 416.2,288.6C419.2,287.3 421.3,284.1 423.8,281.1C426.3,278.2 428.6,273.4 431.3,270.9C434.0,268.5 437.2,266.8 440.2,266.5C443.1,266.2 446.2,267.1 449.0,269.2C451.8,271.2 454.2,275.8 457.0,278.9C459.8,282.0 462.1,286.1 465.8,287.8C469.5,289.5 474.3,289.1 479.1,289.1C483.9,289.1 489.8,288.6 494.6,287.8C499.4,286.9 503.8,285.8 507.9,284.2C511.9,282.7 515.6,279.6 519.0,278.5C522.3,277.3 524.5,276.9 527.8,277.1C531.1,277.4 535.2,278.8 538.9,279.8C542.6,280.8 545.9,282.6 549.9,283.3C554.0,284.1 558.1,284.3 563.2,284.2C568.4,284.1 575.0,283.0 580.9,282.9C586.8,282.7 592.7,283.0 598.6,283.3C604.5,283.7 610.5,284.5 616.4,285.1C622.3,285.7 629.3,286.6 634.1,286.9C638.9,287.2 641.1,287.6 645.1,286.9C649.2,286.1 654.4,283.6 658.4,282.4C662.5,281.3 665.4,280.3 669.5,280.2C673.5,280.2 678.3,281.2 682.8,282.0C687.2,282.8 690.1,284.7 696.0,285.1C701.9,285.5 711.5,284.7 718.2,284.7C724.8,284.7 729.8,284.8 735.9,285.1C742.0,285.4 751.7,286.2 754.9,286.4L754.9,306.0L72.7,306.0Z" fill="url(#gb)" stroke="none"></path><path d="M72.7,305.9C73.7,303.6 76.3,296.3 78.5,292.2C80.7,288.1 83.0,284.1 86.0,281.1C88.9,278.2 93.0,275.7 96.2,274.5C99.3,273.3 101.7,273.5 105.0,274.0C108.3,274.6 112.0,276.5 116.1,277.6C120.2,278.6 124.2,280.0 129.4,280.2C134.5,280.5 141.9,279.1 147.1,278.9C152.2,278.8 155.2,278.6 160.4,279.3C165.5,280.1 172.9,282.7 178.1,283.3C183.2,284.0 186.2,283.8 191.4,283.3C196.5,282.9 201.7,281.1 209.1,280.7C216.4,280.2 227.5,280.5 235.6,280.7C243.7,280.8 251.1,281.1 257.8,281.6C264.4,282.0 270.7,283.6 275.5,283.3C280.3,283.0 282.5,281.0 286.5,279.8C290.6,278.6 295.0,276.8 299.8,276.2C304.6,275.7 309.8,276.5 315.3,276.7C320.8,276.9 327.9,277.8 333.0,277.6C338.2,277.4 342.2,276.0 346.3,275.4C350.4,274.8 353.7,273.9 357.4,274.0C361.1,274.2 364.4,275.1 368.4,276.2C372.5,277.4 377.3,279.1 381.7,280.7C386.1,282.2 390.9,284.1 395.0,285.5C399.1,286.9 402.5,288.6 406.1,289.1C409.6,289.6 413.3,290.0 416.2,288.6C419.2,287.3 421.3,284.1 423.8,281.1C426.3,278.2 428.6,273.4 431.3,270.9C434.0,268.5 437.2,266.8 440.2,266.5C443.1,266.2 446.2,267.1 449.0,269.2C451.8,271.2 454.2,275.8 457.0,278.9C459.8,282.0 462.1,286.1 465.8,287.8C469.5,289.5 474.3,289.1 479.1,289.1C483.9,289.1 489.8,288.6 494.6,287.8C499.4,286.9 503.8,285.8 507.9,284.2C511.9,282.7 515.6,279.6 519.0,278.5C522.3,277.3 524.5,276.9 527.8,277.1C531.1,277.4 535.2,278.8 538.9,279.8C542.6,280.8 545.9,282.6 549.9,283.3C554.0,284.1 558.1,284.3 563.2,284.2C568.4,284.1 575.0,283.0 580.9,282.9C586.8,282.7 592.7,283.0 598.6,283.3C604.5,283.7 610.5,284.5 616.4,285.1C622.3,285.7 629.3,286.6 634.1,286.9C638.9,287.2 641.1,287.6 645.1,286.9C649.2,286.1 654.4,283.6 658.4,282.4C662.5,281.3 665.4,280.3 669.5,280.2C673.5,280.2 678.3,281.2 682.8,282.0C687.2,282.8 690.1,284.7 696.0,285.1C701.9,285.5 711.5,284.7 718.2,284.7C724.8,284.7 729.8,284.8 735.9,285.1C742.0,285.4 751.7,286.2 754.9,286.4" fill="none" stroke="#4fa3ee" stroke-width="1.200"></path></svg>
<!-- sec_cpu -->
<svg class="b" style="left:380px;top:690px;" width="740" height="520" viewBox="0 0 740 520"><defs><filter id="shp" x="-10%" y="-20%" width="120%" height="140%"><feGaussianBlur stdDeviation="6 11"></feGaussianBlur></filter></defs><rect x="52" y="48" width="629" height="420" fill="#000" fill-opacity=".195" filter="url(#shp)"></rect></svg>
<div class="b" style="left:418px;top:727px;width:614px;height:400px;background:#f5f5f5;box-shadow:0 0 4px rgba(0,0,0,.05)"></div>
<div class="b" style="left:427px;top:735px;width:596px;height:385px;background:#fff"></div>
<span class="t" style="left: 441px; top: 749.5px; font-size: 15px; color: rgb(68, 68, 68); letter-spacing: -0.09px;">CPU</span>
<div class="b" style="left:427px;top:783px;width:596px;height:1px;background:#eee"></div>
<div class="b" style="left:611.8px;top:746px;width:76.10000000000002px;height:26.399999999999977px;background:#fff;border:1px solid #e0e0e0"></div>
<span class="t" style="left: 622px; top: 749.5px; font-size: 12px; color: rgb(85, 85, 85); letter-spacing: 0.13px;">Yesterday</span>
<div class="b" style="left:686.9px;top:746px;width:54.10000000000002px;height:26.399999999999977px;background:#20a53a;border:1px solid #20a53a"></div>
<span class="t" style="left: 697px; top: 749.5px; font-size: 12px; color: rgb(255, 255, 255); letter-spacing: 0.24px;">Today</span>
<div class="b" style="left:740px;top:746px;width:85px;height:26.399999999999977px;background:#fff;border:1px solid #e0e0e0"></div>
<span class="t" style="left: 750px; top: 749.5px; font-size: 12px; color: rgb(85, 85, 85); letter-spacing: 0.06px;">Last 7 Days</span>
<div class="b" style="left:824px;top:746px;width:93.39999999999998px;height:26.399999999999977px;background:#fff;border:1px solid #e0e0e0"></div>
<span class="t" style="left: 834px; top: 749.5px; font-size: 12px; color: rgb(85, 85, 85); letter-spacing: 0.18px;">Last 30 Days</span>
<div class="b" style="left:916.4px;top:746px;width:93.60000000000002px;height:26.399999999999977px;background:#fff;border:1px solid #e0e0e0"></div>
<span class="t" style="left: 926.5px; top: 749.5px; font-size: 12px; color: rgb(85, 85, 85); letter-spacing: 0.18px;">Custom Time</span>
<svg class="b" style="left:430px;top:800px;font-family:'Liberation Sans',sans-serif" width="590" height="320" viewBox="0 0 590 320"><path d="M56.8,79.2H533.8" stroke="#e6e6e6" stroke-width="1" fill="none"></path><text x="48.6" y="83.2" text-anchor="end" font-size="11.500" fill="#555">80</text><path d="M56.8,116.2H533.8" stroke="#e6e6e6" stroke-width="1" fill="none"></path><text x="48.6" y="120.2" text-anchor="end" font-size="11.500" fill="#555">60</text><path d="M56.8,153.2H533.8" stroke="#e6e6e6" stroke-width="1" fill="none"></path><text x="48.6" y="157.2" text-anchor="end" font-size="11.500" fill="#555">40</text><path d="M56.8,190.3H533.8" stroke="#e6e6e6" stroke-width="1" fill="none"></path><text x="48.6" y="194.3" text-anchor="end" font-size="11.500" fill="#555">20</text><path d="M56.8,227.4H533.8" stroke="#6e7079" stroke-width="1" fill="none"></path><text x="48.6" y="231.4" text-anchor="end" font-size="11.500" fill="#555">0</text><path d="M56.8,42.7H533.8" stroke="#e6e6e6" stroke-width="1" fill="none"></path><text x="36.6" y="25.0" font-size="11.500" fill="#555">Percent</text><path d="M56.8,47.5H533.8" stroke="#777" stroke-width=".900" stroke-dasharray="4 3" fill="none"></path><path d="M60.3,205.4L61.9,203.0L63.5,208.8L65.1,206.2L66.7,210.0L68.3,209.8L69.9,214.0L71.5,212.7L73.1,214.6L74.7,211.3L76.3,213.1L77.9,210.5L79.5,212.2L81.1,209.1L82.7,211.3L84.3,212.0L85.9,213.8L87.5,212.7L89.1,206.7L90.7,203.3L92.3,208.5L93.9,207.3L95.5,211.6L97.1,210.9L98.7,213.9L100.3,211.0L101.9,214.3L103.5,212.4L105.1,213.0L106.7,210.2L108.3,212.9L109.9,209.0" fill="none" stroke="#4da3f7" stroke-width="2.500" stroke-linejoin="round"></path><path d="M91.5,212V41" stroke="#4da3f7" stroke-width="2.800" fill="none"></path><path d="M128.3,212V41" stroke="#4da3f7" stroke-width="2.800" fill="none"></path><path d="M222.9,212V41" stroke="#4da3f7" stroke-width="2.800" fill="none"></path><path d="M276.7,212V41" stroke="#4da3f7" stroke-width="2.800" fill="none"></path><path d="M91.5,227V42" stroke="#bcdcfa" stroke-width="1" stroke-dasharray="3 2" fill="none"></path><circle cx="91.5" cy="42" r="3.200" fill="#4da3f7" stroke="none"></circle><path d="M60.3,227.4v4" stroke="#6e7079" stroke-width="1" fill="none"></path><path d="M91.5,227.4v4" stroke="#6e7079" stroke-width="1" fill="none"></path><text x="60.5" y="257.5" text-anchor="middle" font-size="10.500" fill="#555">00:00</text><text x="99.0" y="257.5" font-size="10.500" fill="#555">02:00</text></svg>
<div class="b" style="left:440.7px;top:836.4px;width:42.5px;height:20.600000000000023px;background:#5a5a5a;border-radius:3px"></div>
<span class="t" style="left: 447.5px; top: 836.5px; font-size: 11.5px; color: rgb(255, 255, 255); letter-spacing: 0.05px;">97.47</span>
<div class="b" style="left:460.2px;top:1031px;width:99.80000000000001px;height:20.299999999999955px;background:#565656;border-radius:2px"></div>
<span class="t" style="left: 467px; top: 1031px; font-size: 11.5px; color: rgb(255, 255, 255); letter-spacing: -0.32px;">2024-07-08 01:10</span>
<div class="b" style="left:490px;top:1068px;width:70px;height:34px;background:linear-gradient(#dfeaf5 0,#dfeaf5 7px,#f7f9fb 7px,#f7f9fb 100%)"></div>
<svg class="b" style="left:490px;top:1068px;" width="70" height="34" viewBox="0 0 70 34"><path d="M0,30l3,-1 3,.5 3,-1 3,1 3,-.5 3,.5 3,-1 3,.5 3,.500 3,-1 3,.5 3,-.5 3,1 3,-.5 3,.5 3,-.5 3,.5 3,-.5 3,.5V34H0z" fill="#b9d3ee" stroke="#9bc0e6" stroke-width=".8"></path></svg>
<div class="b" style="left:480px;top:1077px;width:22px;height:22px;background:radial-gradient(circle at 50% 40%,#fff 0,#f3f3f3 60%,#e2e2e2 100%);border:1px solid #cfcfcf;border-radius:11px;box-shadow:0 1px 3px rgba(0,0,0,.35)"></div>
<svg class="b" style="left:485.5px;top:1083px;" width="11" height="10" viewBox="0 0 11 10"><path d="M2,3h7M2,5.500h7M2,8h7" stroke="#999" stroke-width="1.100" fill="none"></path></svg>
<div class="b" style="left:541.7px;top:866px;width:439.0999999999999px;height:261px;background:rgba(255,255,255,.97);border-radius:6px 6px 0 0;box-shadow:0 1px 10px rgba(0,0,0,.16);overflow:hidden"></div>
<div class="b" style="left:541.7px;top:866px;width:439.0999999999999px;height:39.5px;background:#fafafa;border-radius:6px 6px 0 0"></div>
<svg class="b" style="left:559px;top:880px;" width="14" height="14" viewBox="0 0 14 14"><circle cx="7" cy="7" r="5.600" fill="none" stroke="#444" stroke-width="1.200"></circle><circle cx="7" cy="7" r="1.600" fill="#444"></circle></svg>
<span class="t" style="left: 581px; top: 877px; font-size: 13px; color: rgb(51, 51, 51); letter-spacing: 0.3px;">Date: 2024-07-08 01:10:00</span>
<div class="b" style="left:563px;top:930px;width:12px;height:12px;background:#3f9df5;border-radius:6px"></div>
<span class="t" style="left: 580px; top: 926.2px; font-size: 13px; color: rgb(51, 51, 51); letter-spacing: -0.35px;">CPU:</span>
<span class="t" style="left: 622.5px; top: 926.2px; font-size: 13px; color: rgb(51, 51, 51); letter-spacing: 0.28px;">100.00%</span>
<div class="b" style="left:560px;top:954px;width:401.5px;height:1px;background:#f0f0f0"></div>
<div class="b" style="left:560px;top:971px;width:401.5px;height:32px;background:#fafafa"></div>
<span class="t" style="left: 571.4px; top: 976.2px; font-size: 11.5px; color: rgb(68, 68, 68); font-weight: 700; letter-spacing: -0.19px;">PID</span>
<span class="t" style="left: 636.2px; top: 976.2px; font-size: 11.5px; color: rgb(68, 68, 68); font-weight: 700; letter-spacing: 0.06px;">Process name</span>
<span class="t" style="left: 765.9px; top: 976.2px; font-size: 11.5px; color: rgb(68, 68, 68); font-weight: 700; letter-spacing: 0.06px;">CPU usage</span>
<span class="t" style="left: 864px; top: 976.2px; font-size: 11.5px; color: rgb(68, 68, 68); font-weight: 700; letter-spacing: 0.05px;">Startup user</span>
<span class="t" style="left: 571px; top: 1008.7px; font-size: 11.5px; color: rgb(51, 51, 51); letter-spacing: 0.13px;">807457</span>
<span class="t" style="left: 636px; top: 1008.7px; font-size: 11.5px; color: rgb(51, 51, 51); letter-spacing: 0.14px;">php-fpm</span>
<span class="t" style="left: 766px; top: 1008.7px; font-size: 11.5px; color: rgb(51, 51, 51); letter-spacing: -0.02px;">99%</span>
<span class="t" style="left: 864px; top: 1008.7px; font-size: 11.5px; color: rgb(51, 51, 51); letter-spacing: 0.06px;">root</span>
<span class="t" style="left: 571px; top: 1040px; font-size: 11.5px; color: rgb(51, 51, 51); letter-spacing: 0.13px;">790331</span>
<span class="t" style="left: 636px; top: 1040px; font-size: 11.5px; color: rgb(51, 51, 51); letter-spacing: 0.11px;">mysqld</span>
<span class="t" style="left: 766px; top: 1040px; font-size: 11.5px; color: rgb(51, 51, 51); letter-spacing: 0.1px;">2.56%</span>
<span class="t" style="left: 864px; top: 1040px; font-size: 11.5px; color: rgb(51, 51, 51); letter-spacing: 0.24px;">mysql</span>
<span class="t" style="left: 571px; top: 1103.7px; font-size: 11.5px; color: rgb(51, 51, 51); letter-spacing: 0.16px;">830</span>
<span class="t" style="left: 636px; top: 1103.7px; font-size: 11.5px; color: rgb(51, 51, 51); letter-spacing: 0.11px;">monitor</span>
<span class="t" style="left: 766px; top: 1103.7px; font-size: 11.5px; color: rgb(51, 51, 51); letter-spacing: 0.1px;">0.55%</span>
<span class="t" style="left: 864px; top: 1103.7px; font-size: 11.5px; color: rgb(51, 51, 51); letter-spacing: 0.06px;">root</span>
<div class="b" style="left:560px;top:1034.5px;width:401.5px;height:1.0px;background:#f1f1f1"></div>
<div class="b" style="left:560px;top:1066.5px;width:401.5px;height:1.0px;background:#f1f1f1"></div>
<div class="b" style="left:571px;top:1076px;width:9px;height:9px;background:#3a3f47"></div>
<div class="b" style="left:580px;top:1076px;width:10px;height:9px;background:#555a60"></div>
<div class="b" style="left:590px;top:1076px;width:10px;height:9px;background:#3a3f47"></div>
<div class="b" style="left:658.5px;top:1076px;width:9.5px;height:9px;background:#d9dadb"></div>
<div class="b" style="left:668px;top:1076px;width:10px;height:9px;background:#3a3f47"></div>
<div class="b" style="left:688px;top:1076px;width:9px;height:9px;background:#3a3f47"></div>
<div class="b" style="left:697px;top:1076px;width:10px;height:9px;background:#666b70"></div>
<div class="b" style="left:707px;top:1076px;width:19.5px;height:9px;background:#3a3f47"></div>
<div class="b" style="left:766px;top:1076px;width:19px;height:9px;background:#6f7478"></div>
<div class="b" style="left:785px;top:1076px;width:10px;height:9px;background:#e9e9e9"></div>
<div class="b" style="left:873.5px;top:1076px;width:9.5px;height:9px;background:#3a3f47"></div>
<!-- sec_containers -->
<svg class="b" style="left:880px;top:230px;" width="1040" height="560" viewBox="0 0 1040 560"><defs><filter id="shc" x="-10%" y="-20%" width="120%" height="140%"><feGaussianBlur stdDeviation="5 6.5"></feGaussianBlur></filter></defs><rect x="48" y="47" width="984" height="463" fill="#000" fill-opacity=".19" filter="url(#shc)"></rect></svg>
<div class="b" style="left:911px;top:267px;width:981px;height:443px;background:#f4f4f4;box-shadow:0 0 4px rgba(0,0,0,.05)"></div>
<div class="b" style="left:921px;top:278px;width:962px;height:418px;background:#fff;border-radius:4px"></div>
<span class="t" style="left: 937px; top: 302.7px; font-size: 18px; color: rgb(43, 43, 43); letter-spacing: 0.52px;">Running containers</span>
<div class="b" style="left:1713px;top:295.5px;width:152px;height:33.5px;background:#fff;border:1px solid #dcdfe1;border-radius:3px;box-shadow:0 1px 1px rgba(0,0,0,.04)"></div>
<span class="t" style="left: 1725px; top: 302.3px; font-size: 13px; color: rgb(85, 85, 85); letter-spacing: 0.23px;">Refresh container list</span>
<div class="b" style="left:937px;top:346px;width:455px;height:114px;background:#fff;border:1px solid #dcdfe1;border-radius:8px"></div>
<span class="t" style="left: 959px; top: 362.6px; font-size: 14px; color: rgb(34, 34, 34); font-weight: 700; letter-spacing: 0.76px;">CPU usage</span>
<span class="t" style="left: 959px; top: 393.3px; font-size: 17px; color: rgb(34, 34, 34); font-weight: 700; letter-spacing: 0.38px;">1.5 %</span>
<div class="b" style="left:959px;top:430px;width:368px;height:6px;background:#ececec;border-radius:3px"></div>
<div class="b" style="left:959px;top:430px;width:6px;height:6px;background:#f7b14f;border-radius:3px"></div>
<span class="t" style="left: 1336px; top: 423.3px; font-size: 12.5px; color: rgb(85, 85, 85); letter-spacing: 0.17px;">1.5%</span>
<div class="b" style="left:1410px;top:346px;width:455px;height:114px;background:#fff;border:1px solid #dcdfe1;border-radius:8px"></div>
<span class="t" style="left: 1432px; top: 362.6px; font-size: 14px; color: rgb(34, 34, 34); font-weight: 700; letter-spacing: 1px;">Memory usage</span>
<span class="t" style="left: 1432px; top: 393.3px; font-size: 17px; color: rgb(34, 34, 34); font-weight: 700; letter-spacing: 0.49px;">1698 MB / 7750 MB</span>
<div class="b" style="left:1432px;top:430px;width:368px;height:6px;background:#ececec;border-radius:3px"></div>
<div class="b" style="left:1432px;top:430px;width:81px;height:6px;background:#3f9df5;border-radius:3px"></div>
<span class="t" style="left: 1806px; top: 423.3px; font-size: 12.5px; color: rgb(85, 85, 85); letter-spacing: 0.14px;">21.9%</span>
<div class="b" style="left:937px;top:477.4px;width:297.5px;height:201.20000000000005px;background:#fff;border:1px solid #dcdfe1;border-radius:4px"></div>
<div class="b" style="left:937px;top:563px;width:297.5px;height:1px;background:#dcdfe1"></div>
<svg class="b" style="left:949px;top:492px;" width="28" height="24" viewBox="0 0 28 24"><g fill="none" stroke="#777" stroke-width="1.500" stroke-linejoin="round" stroke-linecap="round"><rect x="2" y="2" width="23" height="15.500" rx="2.500"></rect><path d="M13.500 17.500v4.500M7.500 22.200h12"></path></g></svg>
<span class="t" style="left: 991px; top: 488.3px; font-size: 15px; color: rgb(32, 165, 58); font-weight: 700; letter-spacing: 0.75px;">lotk2</span>
<span class="t" style="left: 991px; top: 512.3px; font-size: 12.5px; color: rgb(138, 138, 138); letter-spacing: 0.57px;">centos:latest</span>
<span class="t" style="left: 991px; top: 535.3px; font-size: 12.5px; color: rgb(138, 138, 138); letter-spacing: 0.64px;">Create at: 2024-06-28 17:28:57</span>
<div class="b" style="left:949px;top:574px;width:32px;height:95px;background:#ececec;border-radius:4px"></div>
<div class="b" style="left:1002px;top:574px;width:32px;height:95px;background:#ececec;border-radius:4px;overflow:hidden"></div>
<div class="b" style="left:1002px;top:668px;width:32px;height:1px;background:#3f9df5;border-radius:0 0 4px 4px"></div>
<div class="b" style="left:1067px;top:628px;width:14px;height:13px;background:#f7b14f"></div>
<span class="t" style="left: 1089px; top: 625.3px; font-size: 12.5px; color: rgb(138, 138, 138); letter-spacing: -0.2px;">CPU</span>
<span class="t" style="left: 1175px; top: 625.3px; font-size: 12.5px; color: rgb(138, 138, 138); letter-spacing: 1.92px;">0%</span>
<div class="b" style="left:1067px;top:652px;width:14px;height:13px;background:#3f9df5"></div>
<span class="t" style="left: 1089px; top: 648.3px; font-size: 12.5px; color: rgb(138, 138, 138); letter-spacing: 0.11px;">RAM</span>
<span class="t" style="left: 1147px; top: 648.3px; font-size: 12.5px; color: rgb(138, 138, 138); letter-spacing: 0.24px;">5.15 MB</span>
<div class="b" style="left:1252px;top:477.4px;width:297.5px;height:201.20000000000005px;background:#fff;border:1px solid #dcdfe1;border-radius:4px"></div>
<div class="b" style="left:1252px;top:563px;width:297.5px;height:1px;background:#dcdfe1"></div>
<svg class="b" style="left:1264px;top:492px;" width="28" height="24" viewBox="0 0 28 24"><g fill="none" stroke="#777" stroke-width="1.500" stroke-linejoin="round" stroke-linecap="round"><rect x="2" y="2" width="23" height="15.500" rx="2.500"></rect><path d="M13.500 17.500v4.500M7.500 22.200h12"></path></g></svg>
<span class="t" style="left: 1306px; top: 488.3px; font-size: 15px; color: rgb(32, 165, 58); font-weight: 700; letter-spacing: 0.44px;">lotk</span>
<span class="t" style="left: 1306px; top: 512.3px; font-size: 12.5px; color: rgb(138, 138, 138); letter-spacing: 0.62px;">nginx:latest</span>
<span class="t" style="left: 1306px; top: 535.3px; font-size: 12.5px; color: rgb(138, 138, 138); letter-spacing: 0.64px;">Create at: 2024-06-28 17:06:24</span>
<div class="b" style="left:1264px;top:574px;width:32px;height:95px;background:#ececec;border-radius:4px"></div>
<div class="b" style="left:1317px;top:574px;width:32px;height:95px;background:#ececec;border-radius:4px;overflow:hidden"></div>
<div class="b" style="left:1317px;top:666px;width:32px;height:3px;background:#3f9df5;border-radius:0 0 4px 4px"></div>
<div class="b" style="left:1382px;top:628px;width:14px;height:13px;background:#f7b14f"></div>
<span class="t" style="left: 1404px; top: 625.3px; font-size: 12.5px; color: rgb(138, 138, 138); letter-spacing: -0.2px;">CPU</span>
<span class="t" style="left: 1471px; top: 625.3px; font-size: 12.5px; color: rgb(138, 138, 138); letter-spacing: 0.89px;">0.03%</span>
<div class="b" style="left:1382px;top:652px;width:14px;height:13px;background:#3f9df5"></div>
<span class="t" style="left: 1404px; top: 648.3px; font-size: 12.5px; color: rgb(138, 138, 138); letter-spacing: 0.11px;">RAM</span>
<span class="t" style="left: 1446px; top: 648.3px; font-size: 12.5px; color: rgb(138, 138, 138); letter-spacing: 0.44px;">196.70 MB</span>
<div class="b" style="left:1568px;top:477.4px;width:297.5px;height:201.20000000000005px;background:#fff;border:1px solid #dcdfe1;border-radius:4px"></div>
<div class="b" style="left:1568px;top:563px;width:297.5px;height:1px;background:#dcdfe1"></div>
<svg class="b" style="left:1580px;top:492px;" width="28" height="24" viewBox="0 0 28 24"><g fill="none" stroke="#777" stroke-width="1.500" stroke-linejoin="round" stroke-linecap="round"><rect x="2" y="2" width="23" height="15.500" rx="2.500"></rect><path d="M13.500 17.500v4.500M7.500 22.200h12"></path></g></svg>
<span class="t" style="left: 1622px; top: 488.3px; font-size: 15px; color: rgb(32, 165, 58); font-weight: 700; letter-spacing: 0.33px;">asdfasdf</span>
<span class="t" style="left: 1622px; top: 512.3px; font-size: 12.5px; color: rgb(138, 138, 138); letter-spacing: 0.52px;">nginx:latest</span>
<span class="t" style="left: 1622px; top: 535.3px; font-size: 12.5px; color: rgb(138, 138, 138); letter-spacing: 0.64px;">Create at: 2024-06-28 16:56:16</span>
<div class="b" style="left:1580px;top:574px;width:32px;height:95px;background:#ececec;border-radius:4px"></div>
<div class="b" style="left:1633px;top:574px;width:32px;height:95px;background:#ececec;border-radius:4px;overflow:hidden"></div>
<div class="b" style="left:1633px;top:667px;width:32px;height:2px;background:#3f9df5;border-radius:0 0 4px 4px"></div>
<div class="b" style="left:1698px;top:628px;width:14px;height:13px;background:#f7b14f"></div>
<span class="t" style="left: 1720px; top: 625.3px; font-size: 12.5px; color: rgb(138, 138, 138); letter-spacing: -0.2px;">CPU</span>
<span class="t" style="left: 1787px; top: 625.3px; font-size: 12.5px; color: rgb(138, 138, 138); letter-spacing: 0.89px;">0.03%</span>
<div class="b" style="left:1698px;top:652px;width:14px;height:13px;background:#3f9df5"></div>
<span class="t" style="left: 1720px; top: 648.3px; font-size: 12.5px; color: rgb(138, 138, 138); letter-spacing: 0.11px;">RAM</span>
<span class="t" style="left: 1765px; top: 648.3px; font-size: 12.5px; color: rgb(138, 138, 138); letter-spacing: 0.07px;">137.10 MB</span>
</body></html>
